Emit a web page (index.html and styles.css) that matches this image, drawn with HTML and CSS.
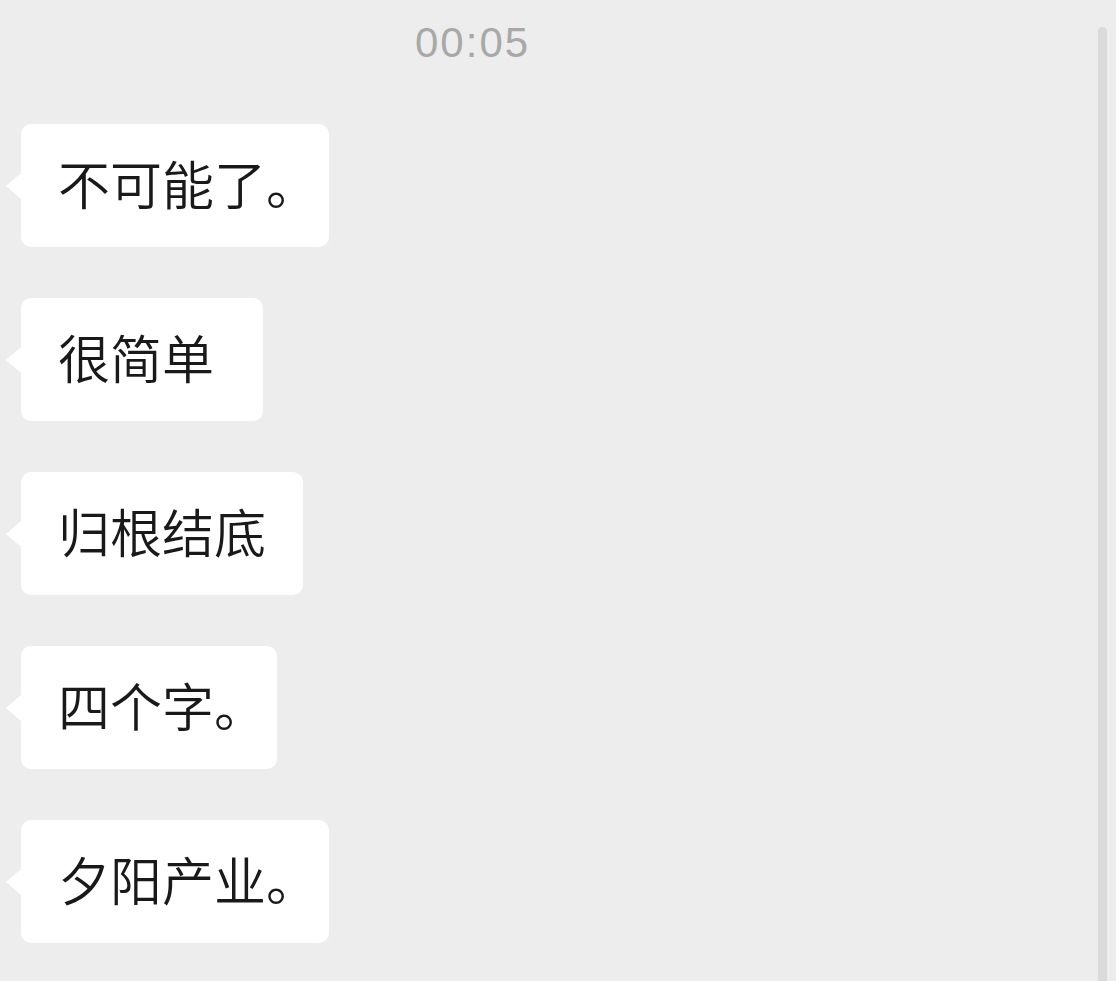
FILE: index.html
```html
<!DOCTYPE html>
<html lang="zh-CN">
<head>
  <meta charset="UTF-8">
  <title>聊天记录</title>
  <link rel="stylesheet" href="styles.css">
</head>

<body>

  <div class="screen">
    <div class="chat">
      <div class="time">00:05</div>

      <div class="messages">
        <div class="bubble">不可能了<span class="stop">。</span></div>
        <div class="bubble">很简单&nbsp;</div>
        <div class="bubble">归根结底</div>
        <div class="bubble">四个字<span class="stop">。</span></div>
        <div class="bubble">夕阳产业<span class="stop">。</span></div>
      </div>
    </div>

    <div class="scrollbar"></div>
  </div>

</body>
</html>
```

FILE: styles.css
```css
body {
  margin: 0;
  padding: 0;
  background: #ededed;
  font-family: "Noto Sans CJK SC", sans-serif;
  overflow: hidden;
}

.screen {
  display: flex;
  height: 981px;
}

.chat {
  flex: 1;
}

.time {
  margin-top: 22px;
  padding-left: 415px;
  font-family: "Liberation Sans", Arial, sans-serif;
  font-size: 42px;
  line-height: 42px;
  letter-spacing: 2px;
  color: #a8a8a8;
}

.messages {
  display: flex;
  flex-direction: column;
  align-items: flex-start;
  gap: 51px;
  margin-top: 60px;
  padding-left: 21px;
}

.bubble {
  position: relative;
  background: white;
  border-radius: 10px;
  padding: 31px 37px 37px 37px;
  font-size: 52px;
  font-weight: 350;
  line-height: 55px;
  color: #191919;
  white-space: nowrap;
}

/* little arrow on the left side of each bubble */
.bubble::before {
  content: "";
  position: absolute;
  left: -15px;
  top: 50%;
  margin-top: -13px;
  border-top: 13px solid transparent;
  border-bottom: 13px solid transparent;
  border-right: 15px solid white;
}

/* 句号只占半个字宽 */
.stop {
  margin-right: -0.5em;
}

.scrollbar {
  width: 9px;
  margin: 27px 9px 0 0;
  background: #dadada;
  border-radius: 5px 5px 0 0;
}
```
